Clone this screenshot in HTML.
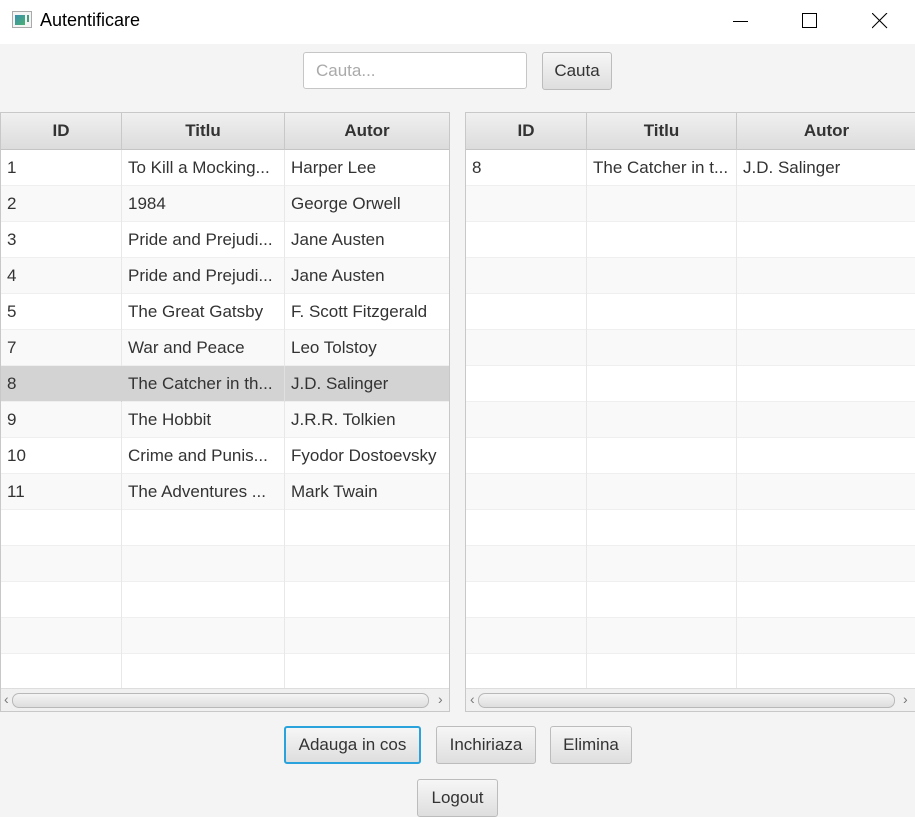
<!DOCTYPE html>
<html><head><meta charset="utf-8"><style>
*{box-sizing:border-box;margin:0;padding:0}
body{width:915px;height:817px;overflow:hidden;background:#f4f4f4;font-family:"Liberation Sans","DejaVu Sans",sans-serif;position:relative;color:#333}
.tb{position:absolute;left:0;top:0;width:915px;height:44px;background:#fff}
.abs{position:absolute}
.panel{position:absolute;top:112px;height:600px;border:1px solid #c8c8c8;background:#fff;overflow:hidden}
.hdr{position:absolute;top:0;height:37px;background:linear-gradient(#f0f0f0,#dcdcdc);border-right:1px solid #c8c8c8;border-bottom:1px solid #c4c4c4;font-weight:bold;font-size:17px;text-align:center;line-height:36px;color:#333}
.row{position:absolute;left:0;right:0;height:36px;border-bottom:1px solid #efefef}
.cell{position:absolute;top:0;height:36px;border-right:1px solid #e8e8e8;font-size:17px;line-height:35px;padding-left:6px;white-space:nowrap;overflow:hidden;color:#333}
.sb{position:absolute;left:0;right:0;bottom:0;height:23px;background:#f0f0f0;border-top:1px solid #ddd}
.thumb{position:absolute;top:4px;height:15px;border:1px solid #b8b8b8;border-radius:7px;background:linear-gradient(#f4f4f4,#dedede)}
.arr{position:absolute;top:2px;font-size:14px;color:#777}
.btn{position:absolute;height:38px;border:1px solid #bcbcbc;border-radius:3px;background:linear-gradient(#f6f6f6,#dedede);font-size:17px;text-align:center;line-height:36px;color:#333}
</style></head><body>
<div class="tb">
 <div class="abs" style="left:12px;top:11px;width:20px;height:17px;border:1px solid #aaa;background:#f4f4f4"><div class="abs" style="left:2px;top:3px;width:10px;height:10px;background:linear-gradient(135deg,#3a8fb0,#4ab070)"></div><div class="abs" style="left:14px;top:3px;width:2px;height:7px;background:#4a9a80"></div></div>
 <div class="abs" style="left:40px;top:10px;font-size:18px;color:#000">Autentificare</div>
 <div class="abs" style="left:733px;top:21px;width:15px;height:1px;background:#000"></div>
 <div class="abs" style="left:802px;top:13px;width:15px;height:15px;border:1px solid #000"></div>
 <svg class="abs" style="left:872px;top:13px" width="16" height="16"><path d="M0 0L15 15M15 0L0 15" stroke="#000" stroke-width="1.1"/></svg>
</div>
<div class="abs" style="left:303px;top:52px;width:224px;height:37px;border:1px solid #c6c6c6;border-radius:3px;background:#fff;font-size:17px;color:#aaa;padding-left:12px;line-height:35px">Cauta...</div>
<div class="btn" style="left:542px;top:52px;width:70px">Cauta</div>

<div class="panel" style="left:0;width:450px">
 <div class="hdr" style="left:0;width:121px">ID</div>
 <div class="hdr" style="left:121px;width:163px">Titlu</div>
 <div class="hdr" style="left:284px;width:165px">Autor</div>
 <div style="position:absolute;top:37px;left:0;right:0">
  <div class="row" style="top:0;background:#fff"><div class="cell" style="left:0;width:121px">1</div><div class="cell" style="left:121px;width:163px">To Kill a Mocking...</div><div class="cell" style="left:284px;width:165px">Harper Lee</div></div>
  <div class="row" style="top:36px;background:#f9f9f9"><div class="cell" style="left:0;width:121px">2</div><div class="cell" style="left:121px;width:163px">1984</div><div class="cell" style="left:284px;width:165px">George Orwell</div></div>
  <div class="row" style="top:72px;background:#fff"><div class="cell" style="left:0;width:121px">3</div><div class="cell" style="left:121px;width:163px">Pride and Prejudi...</div><div class="cell" style="left:284px;width:165px">Jane Austen</div></div>
  <div class="row" style="top:108px;background:#f9f9f9"><div class="cell" style="left:0;width:121px">4</div><div class="cell" style="left:121px;width:163px">Pride and Prejudi...</div><div class="cell" style="left:284px;width:165px">Jane Austen</div></div>
  <div class="row" style="top:144px;background:#fff"><div class="cell" style="left:0;width:121px">5</div><div class="cell" style="left:121px;width:163px">The Great Gatsby</div><div class="cell" style="left:284px;width:165px">F. Scott Fitzgerald</div></div>
  <div class="row" style="top:180px;background:#f9f9f9"><div class="cell" style="left:0;width:121px">7</div><div class="cell" style="left:121px;width:163px">War and Peace</div><div class="cell" style="left:284px;width:165px">Leo Tolstoy</div></div>
  <div class="row" style="top:216px;background:#d3d3d3"><div class="cell" style="left:0;width:121px;border-color:#d3d3d3">8</div><div class="cell" style="left:121px;width:163px;border-color:#e0e0e0">The Catcher in th...</div><div class="cell" style="left:284px;width:165px">J.D. Salinger</div></div>
  <div class="row" style="top:252px;background:#f9f9f9"><div class="cell" style="left:0;width:121px">9</div><div class="cell" style="left:121px;width:163px">The Hobbit</div><div class="cell" style="left:284px;width:165px">J.R.R. Tolkien</div></div>
  <div class="row" style="top:288px;background:#fff"><div class="cell" style="left:0;width:121px">10</div><div class="cell" style="left:121px;width:163px">Crime and Punis...</div><div class="cell" style="left:284px;width:165px">Fyodor Dostoevsky</div></div>
  <div class="row" style="top:324px;background:#f9f9f9"><div class="cell" style="left:0;width:121px">11</div><div class="cell" style="left:121px;width:163px">The Adventures ...</div><div class="cell" style="left:284px;width:165px">Mark Twain</div></div>
  <div class="row" style="top:360px;background:#fff"><div class="cell" style="left:0;width:121px"></div><div class="cell" style="left:121px;width:163px"></div><div class="cell" style="left:284px;width:165px"></div></div>
  <div class="row" style="top:396px;background:#f9f9f9"><div class="cell" style="left:0;width:121px"></div><div class="cell" style="left:121px;width:163px"></div><div class="cell" style="left:284px;width:165px"></div></div>
  <div class="row" style="top:432px;background:#fff"><div class="cell" style="left:0;width:121px"></div><div class="cell" style="left:121px;width:163px"></div><div class="cell" style="left:284px;width:165px"></div></div>
  <div class="row" style="top:468px;background:#f9f9f9"><div class="cell" style="left:0;width:121px"></div><div class="cell" style="left:121px;width:163px"></div><div class="cell" style="left:284px;width:165px"></div></div>
  <div class="row" style="top:504px;background:#fff"><div class="cell" style="left:0;width:121px"></div><div class="cell" style="left:121px;width:163px"></div><div class="cell" style="left:284px;width:165px"></div></div>
 </div>
 <div class="sb"><span class="arr" style="left:3px">‹</span><div class="thumb" style="left:11px;width:417px"></div><span class="arr" style="left:437px">›</span></div>
</div>

<div class="panel" style="left:465px;width:450px;border-right:none">
 <div class="hdr" style="left:0;width:121px">ID</div>
 <div class="hdr" style="left:121px;width:150px">Titlu</div>
 <div class="hdr" style="left:271px;width:179px;border-right:none">Autor</div>
 <div style="position:absolute;top:37px;left:0;right:0">
  <div class="row" style="top:0;background:#fff"><div class="cell" style="left:0;width:121px">8</div><div class="cell" style="left:121px;width:150px">The Catcher in t...</div><div class="cell" style="left:271px;width:179px">J.D. Salinger</div></div>
  <div class="row" style="top:36px;background:#f9f9f9"><div class="cell" style="left:0;width:121px"></div><div class="cell" style="left:121px;width:150px"></div><div class="cell" style="left:271px;width:179px"></div></div>
  <div class="row" style="top:72px;background:#fff"><div class="cell" style="left:0;width:121px"></div><div class="cell" style="left:121px;width:150px"></div><div class="cell" style="left:271px;width:179px"></div></div>
  <div class="row" style="top:108px;background:#f9f9f9"><div class="cell" style="left:0;width:121px"></div><div class="cell" style="left:121px;width:150px"></div><div class="cell" style="left:271px;width:179px"></div></div>
  <div class="row" style="top:144px;background:#fff"><div class="cell" style="left:0;width:121px"></div><div class="cell" style="left:121px;width:150px"></div><div class="cell" style="left:271px;width:179px"></div></div>
  <div class="row" style="top:180px;background:#f9f9f9"><div class="cell" style="left:0;width:121px"></div><div class="cell" style="left:121px;width:150px"></div><div class="cell" style="left:271px;width:179px"></div></div>
  <div class="row" style="top:216px;background:#fff"><div class="cell" style="left:0;width:121px"></div><div class="cell" style="left:121px;width:150px"></div><div class="cell" style="left:271px;width:179px"></div></div>
  <div class="row" style="top:252px;background:#f9f9f9"><div class="cell" style="left:0;width:121px"></div><div class="cell" style="left:121px;width:150px"></div><div class="cell" style="left:271px;width:179px"></div></div>
  <div class="row" style="top:288px;background:#fff"><div class="cell" style="left:0;width:121px"></div><div class="cell" style="left:121px;width:150px"></div><div class="cell" style="left:271px;width:179px"></div></div>
  <div class="row" style="top:324px;background:#f9f9f9"><div class="cell" style="left:0;width:121px"></div><div class="cell" style="left:121px;width:150px"></div><div class="cell" style="left:271px;width:179px"></div></div>
  <div class="row" style="top:360px;background:#fff"><div class="cell" style="left:0;width:121px"></div><div class="cell" style="left:121px;width:150px"></div><div class="cell" style="left:271px;width:179px"></div></div>
  <div class="row" style="top:396px;background:#f9f9f9"><div class="cell" style="left:0;width:121px"></div><div class="cell" style="left:121px;width:150px"></div><div class="cell" style="left:271px;width:179px"></div></div>
  <div class="row" style="top:432px;background:#fff"><div class="cell" style="left:0;width:121px"></div><div class="cell" style="left:121px;width:150px"></div><div class="cell" style="left:271px;width:179px"></div></div>
  <div class="row" style="top:468px;background:#f9f9f9"><div class="cell" style="left:0;width:121px"></div><div class="cell" style="left:121px;width:150px"></div><div class="cell" style="left:271px;width:179px"></div></div>
  <div class="row" style="top:504px;background:#fff"><div class="cell" style="left:0;width:121px"></div><div class="cell" style="left:121px;width:150px"></div><div class="cell" style="left:271px;width:179px"></div></div>
 </div>
 <div class="sb"><span class="arr" style="left:4px">‹</span><div class="thumb" style="left:12px;width:417px"></div><span class="arr" style="left:437px">›</span></div>
</div>

<div class="btn" style="left:284px;top:726px;width:137px;border:2px solid #2aa3dc;line-height:34px">Adauga in cos</div>
<div class="btn" style="left:436px;top:726px;width:100px">Inchiriaza</div>
<div class="btn" style="left:550px;top:726px;width:82px">Elimina</div>
<div class="btn" style="left:417px;top:779px;width:81px">Logout</div>
</body></html>
